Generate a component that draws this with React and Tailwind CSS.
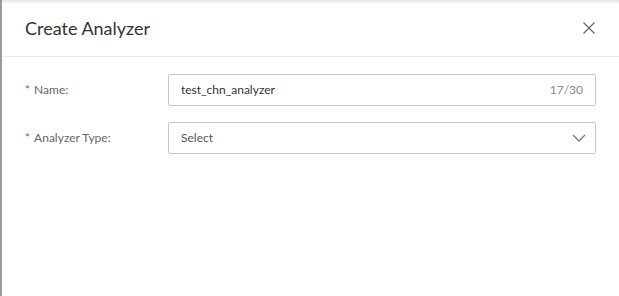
const Label = ({ children }) => (
    <label className="w-[143px] shrink-0 text-[12px] text-[#666]">
        <span className="mr-[4px] text-[#e33]">*</span>
        {children}
    </label>
)

const App = () => {
    return (
        <div className="h-[296px] w-[619px] overflow-hidden bg-white font-['Lato',sans-serif]">
            <div className="relative flex h-full flex-col border-l-2 border-[#9a9a9a]">
                {/* top shadow */}
                <div className="absolute inset-x-0 top-0 h-[4px] bg-gradient-to-b from-[#e4e4e4] to-white" />

                {/* Header */}
                <div className="flex h-[57px] items-center justify-between border-b border-[#ebebeb] pl-[23px] pr-[24px]">
                    <h2 className="text-[18px] text-[#333]">Create Analyzer</h2>
                    <svg width="12" height="12" viewBox="0 0 12 12" fill="none" stroke="#666" strokeWidth="1.2">
                        <path d="M0.5 0.5L11.5 11.5M11.5 0.5L0.5 11.5" />
                    </svg>
                </div>

                {/* Form */}
                <div className="flex flex-col gap-[16px] pl-[23px] pr-[23px] pt-[17px]">
                    <div className="flex items-center">
                        <Label>Name:</Label>
                        <div className="flex h-[32px] flex-1 items-center justify-between rounded-[2px] border border-[#c8c8c8] px-[12px] text-[12px]">
                            <span className="text-[#333]">test_chn_analyzer</span>
                            <span className="pr-[-1px] text-[#888]">17/30</span>
                        </div>
                    </div>
                    <div className="flex items-center">
                        <Label>Analyzer Type:</Label>
                        <div className="flex h-[32px] flex-1 items-center justify-between rounded-[2px] border border-[#c8c8c8] pl-[12px] pr-[9px] text-[12px]">
                            <span className="text-[#555]">Select</span>
                            <svg width="14" height="8" viewBox="0 0 14 8" fill="none" stroke="#777" strokeWidth="1.3">
                                <path d="M1 1L7 7L13 1" />
                            </svg>
                        </div>
                    </div>
                </div>
            </div>
        </div>
    )
}

export default App
